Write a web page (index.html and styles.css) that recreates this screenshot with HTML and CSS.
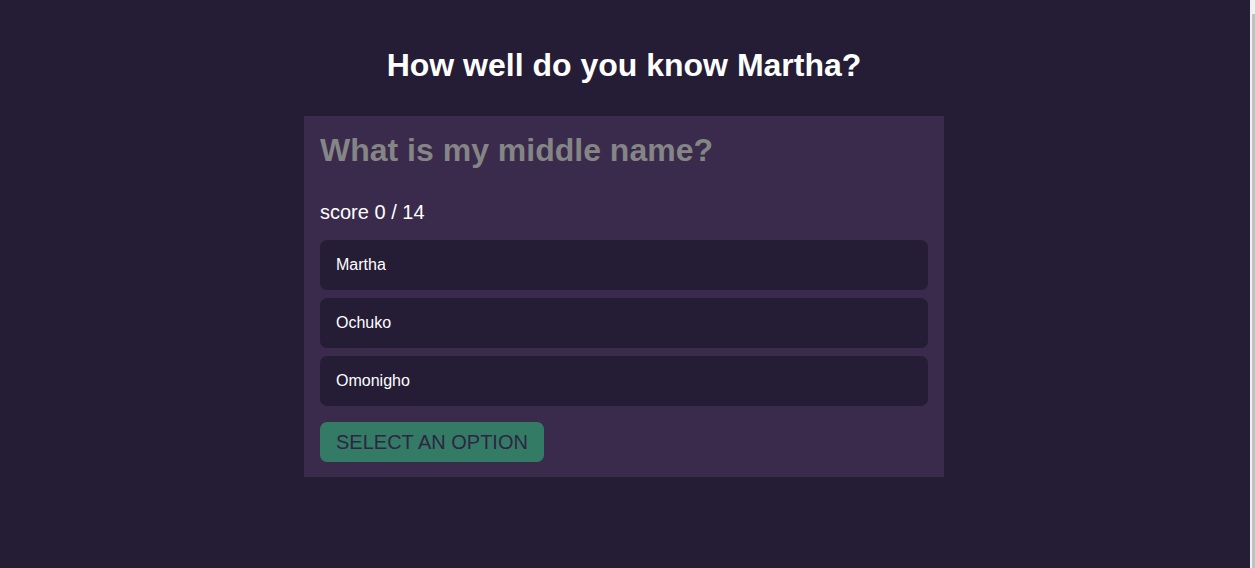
FILE: index.html
```html
<!DOCTYPE html>
<html lang="en">
<head>
<meta charset="utf-8">
<title>Quiz</title>
<link rel="stylesheet" href="styles.css">
</head>
<body>
<div class="page">
  <main class="main">
    <h1 class="title">How well do you know Martha?</h1>
    <section class="card">
      <h2 class="question">What is my middle name?</h2>
      <p class="score">score 0 / 14</p>
      <div class="options">
        <button class="option">Martha</button>
        <button class="option">Ochuko</button>
        <button class="option">Omonigho</button>
      </div>
      <button class="submit">Select an option</button>
    </section>
  </main>
  <div class="scrollbar"><div class="thumb"></div></div>
</div>
</body>
</html>
```
FILE: styles.css
```css
html, body {
  margin: 0;
  height: 100%;
}
body {
  background: #251c36;
  font-family: "Liberation Sans", Arial, sans-serif;
  color: #fff;
}
.page {
  display: flex;
  height: 100%;
}
.main {
  flex: 1;
  display: flex;
  flex-direction: column;
  align-items: center;
  padding-top: 47px;
  padding-right: 2px;
}
.title {
  margin: 0 0 32px;
  font-size: 32px;
  line-height: 37px;
  font-weight: bold;
}
.card {
  width: 608px;
  padding: 16px 16px 15px;
  background: #3a2b4d;
  box-sizing: content-box;
}
.question {
  margin: 0;
  font-size: 32px;
  line-height: 37px;
  color: #858585;
}
.score {
  margin: 32px 0 16px;
  font-size: 20px;
  line-height: 23px;
}
.options {
  display: flex;
  flex-direction: column;
  gap: 8px;
}
.option {
  height: 50px;
  padding: 0 16px;
  border: 0;
  border-radius: 7px;
  background: #251c36;
  color: #fff;
  font-family: inherit;
  font-size: 16px;
  text-align: left;
}
.submit {
  align-self: flex-start;
  margin-top: 16px;
  height: 40px;
  padding: 0 16px;
  border: 0;
  border-radius: 7px;
  background: #337b65;
  color: #2e2543;
  font-family: inherit;
  font-size: 20px;
  text-transform: uppercase;
}
.scrollbar {
  width: 3px;
  border-left: 2px solid #f1f1f1;
  background: #f1f1f1;
  padding-top: 14px;
  display: flex;
}
.thumb {
  flex: 1;
  background: #c1c1c1;
}
```
